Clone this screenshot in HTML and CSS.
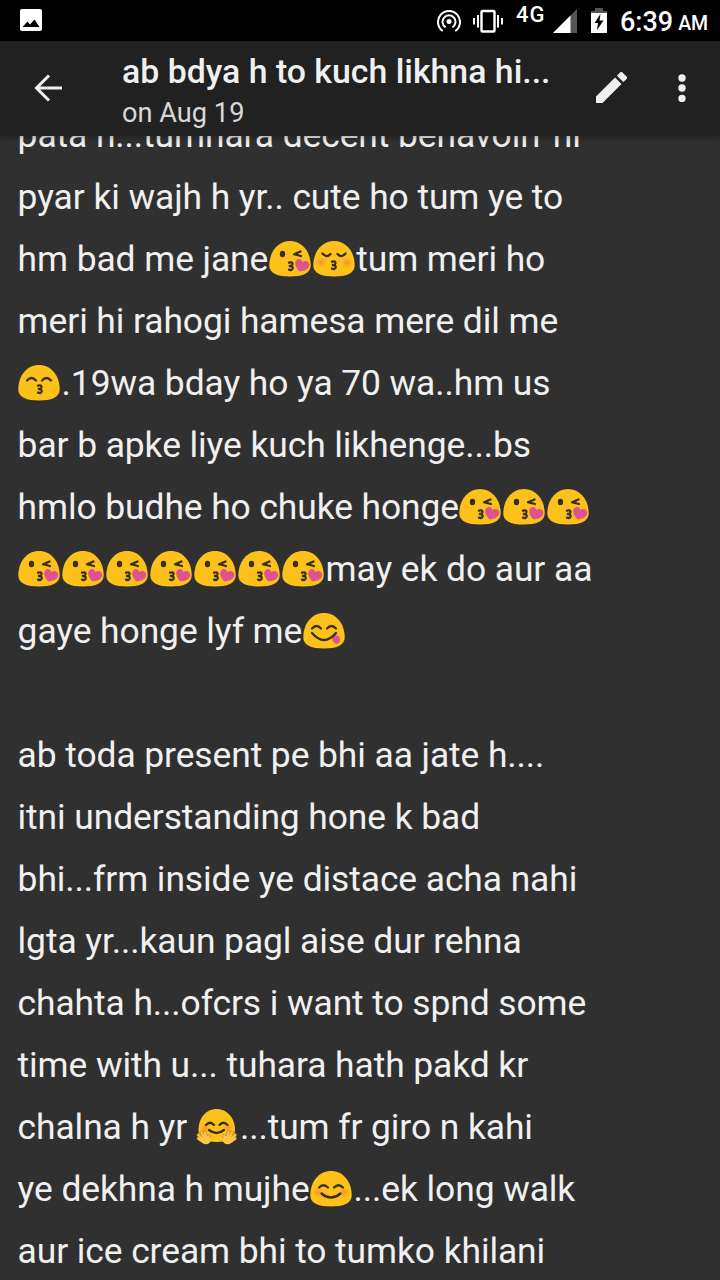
FILE: index.html
```
<!DOCTYPE html>
<html lang="hi-Latn">
<head>
<meta charset="utf-8">
<title>Note</title>
<link rel="stylesheet" href="styles.css">
</head>
<body>
<svg class="defs" aria-hidden="true">
  <defs>
    <radialGradient id="blush"><stop offset="0" stop-color="#f9852f" stop-opacity=".85"/><stop offset="1" stop-color="#f9a025" stop-opacity="0"/></radialGradient>
    <path id="head" d="M22 4C10 4 1.300 14.500 1.300 28.500C1.300 36.500 10 39.500 22 39.500S42.700 36.500 42.700 28.500C42.700 14.500 34 4 22 4Z" fill="#fcc21b"/>
    <path id="pout" d="M21 24.700Q25 23.700 24.500 26.300Q24 28 21.800 28Q25 28 24.700 30.500Q24 32.700 21 31.700" class="line"/>
    <symbol id="kiss" viewBox="0 0 44 44">
      <use href="#head"/><ellipse cx="14.500" cy="17" rx="2.700" ry="3.300" fill="#3a2f22"/>
      <path d="M32.500 14.500L26 17.200L33 19" class="line"/><use href="#pout" x="0" y="1"/>
      <path d="M31.500 34.500C27 30 26.500 26 28 23.600C30 21 33.500 21.500 34.300 25C37.500 22.500 41.500 24.500 41.300 28C41 31.500 37 34 31.500 34.500Z" fill="#dd538f"/>
    </symbol>
    <symbol id="blushkiss" viewBox="0 0 44 44">
      <use href="#head"/><circle cx="9" cy="25.500" r="6" fill="url(#blush)"/><circle cx="35" cy="25.500" r="6" fill="url(#blush)"/>
      <path d="M10.500 16.500Q14.500 21.500 18.500 17M25.500 17Q29.500 21.500 33.500 16.500" class="line"/><use href="#pout" x="-1"/>
    </symbol>
    <symbol id="smilekiss" viewBox="0 0 44 44">
      <use href="#head"/><path d="M10 19.500Q14.500 14.500 19 19.500M25 19.500Q29.500 14.500 34 19.500" class="line"/><use href="#pout"/>
    </symbol>
    <symbol id="yum" viewBox="0 0 44 44">
      <use href="#head"/><path d="M10 19.500Q14.500 14.500 19 19.500M25 19.500Q29.500 14.500 34 19.500" class="line"/>
      <path d="M31 28C34 24.500 38 27 38 31C38 35 33.500 36 31.500 33Q30 31 30 29Z" fill="#dd538f"/><path d="M10 24Q22 38 34 24" class="line"/>
    </symbol>
    <symbol id="smile" viewBox="0 0 44 44">
      <use href="#head"/><circle cx="9" cy="25.500" r="6" fill="url(#blush)"/><circle cx="35" cy="25.500" r="6" fill="url(#blush)"/>
      <path d="M10 20.500Q14.500 16 19 20.500M25 20.500Q29.500 16 34 20.500M12.500 26.500Q22 34.500 31.500 26.500" class="line"/>
    </symbol>
    <symbol id="hand" viewBox="0 0 16 14" overflow="visible">
      <path d="M4.500 2L7.500 8M1.500 4.500L6 9M1.500 8L6 11M8 1.800L9 7M12.500 5.500L11 9" stroke="#c98a1c" stroke-width="3.600" stroke-linecap="round"/>
      <ellipse cx="9" cy="9.500" rx="4.800" ry="4.200" fill="#fcc64a"/>
      <path d="M4.500 2L7.500 8M1.500 4.500L6 9M1.500 8L6 11M8 1.800L9 7M12.500 5.500L11 9" stroke="#fcc64a" stroke-width="2.200" stroke-linecap="round"/>
    </symbol>
    <symbol id="hug" viewBox="0 0 44 44">
      <path d="M21.500 4C11 4 3.500 13 3.500 25C3.500 34 10 37 21.500 37S40 34 40 25C40 13 32 4 21.500 4Z" fill="#fcc21b"/>
      <circle cx="10" cy="23.500" r="5" fill="url(#blush)"/><circle cx="33" cy="23.500" r="5" fill="url(#blush)"/>
      <path d="M11 20Q15 15.500 19 20M24.500 20Q28.500 15.500 32.500 20M14 25Q21.500 31 29 25" class="line"/>
      <use href="#hand" x="2" y="25.500" width="16" height="14"/><g transform="translate(41.500 25.500) scale(-1 1)"><use href="#hand" width="16" height="14"/></g>
    </symbol>
  </defs>
</svg>
<div class="screen">
  <div class="status">
    <svg class="picture" width="22" height="22" viewBox="0 0 22 22"><rect width="22" height="22" rx="2" fill="#fff"/><path d="M2.500 18L7.500 12.500L10 15.500L14.500 10.500L19.500 18Z"/></svg>
    <svg class="hotspot" width="24" height="24" viewBox="0 0 24 24" fill="none" stroke="#fff" stroke-width="2"><circle cx="12" cy="12.500" r="2.500" fill="#fff" stroke="none"/><path d="M5.800 22A11 11 0 1 1 18.200 22M8.600 18.300A6.500 6.500 0 1 1 15.400 18.300"/></svg>
    <svg class="vibrate" width="30" height="24" viewBox="0 0 30 24" fill="none" stroke="#fff" stroke-width="2"><rect x="8.500" y="2" width="13" height="20.500" rx="1" stroke-width="2.400"/><path d="M5 6V18.500M1 9V15.500M25 6V18.500M29 9V15.500"/></svg>
    <span class="network">4G</span>
    <svg class="signal" width="24" height="24" viewBox="0 0 24 24"><path d="M0 24L24 0V24Z" fill="#555"/><path d="M0 24L17.500 6.500V24Z" fill="#fff"/></svg>
    <svg class="battery" width="16" height="25" viewBox="0 0 16 25"><path d="M0 3H4V0H12V3H16V7H0Z" fill="#555"/><path d="M0 5H16V25H0Z" fill="#fff"/><path d="M9.500 6L3.500 15H7L6 22L12.500 12.500H8.500Z"/></svg>
    <span class="time">6:39</span><span class="ampm">AM</span>
  </div>
  <header class="bar">
    <svg class="back" width="28" height="28" viewBox="0 0 28 28" fill="none" stroke="#f0f0f0" stroke-width="3"><path d="M15 1.500L2.500 14L15 26.500M2.500 14H28"/></svg>
    <div class="heading"><h1 class="title">ab bdya h to kuch likhna hi...</h1><div class="date">on Aug 19</div></div>
    <svg class="edit" width="31" height="31" viewBox="3 3 18 18" fill="#f0f0f0"><path d="M3 17.250V21h3.750L17.810 9.940l-3.750-3.750L3 17.250zM20.710 7.040a1 1 0 0 0 0-1.410l-2.340-2.340a1 1 0 0 0-1.410 0l-1.830 1.830 3.750 3.750 1.830-1.830z"/></svg>
    <svg class="more" width="8" height="28" viewBox="0 0 8 28" fill="#f0f0f0"><circle cx="4" cy="4" r="3.700"/><circle cx="4" cy="14" r="3.700"/><circle cx="4" cy="24.500" r="3.700"/></svg>
  </header>
  <main class="note">
    <div class="lines">
      <div>pata h...tumhara decent behavoirr hi</div>
      <div>pyar ki wajh h yr.. cute ho tum ye to</div>
      <div>hm bad me jane<svg class="emoji"><use href="#kiss"/></svg><svg class="emoji"><use href="#blushkiss"/></svg>tum meri ho</div>
      <div>meri hi rahogi hamesa mere dil me</div>
      <div><svg class="emoji"><use href="#smilekiss"/></svg>.19wa bday ho ya 70 wa..hm us</div>
      <div>bar b apke liye kuch likhenge...bs</div>
      <div>hmlo budhe ho chuke honge<svg class="emoji"><use href="#kiss"/></svg><svg class="emoji"><use href="#kiss"/></svg><svg class="emoji"><use href="#kiss"/></svg></div>
      <div><svg class="emoji"><use href="#kiss"/></svg><svg class="emoji"><use href="#kiss"/></svg><svg class="emoji"><use href="#kiss"/></svg><svg class="emoji"><use href="#kiss"/></svg><svg class="emoji"><use href="#kiss"/></svg><svg class="emoji"><use href="#kiss"/></svg><svg class="emoji"><use href="#kiss"/></svg>may ek do aur aa</div>
      <div>gaye honge lyf me<svg class="emoji"><use href="#yum"/></svg></div>
      <div></div>
      <div>ab toda present pe bhi aa jate h....</div>
      <div>itni understanding hone k bad</div>
      <div>bhi...frm inside ye distace acha nahi</div>
      <div>lgta yr...kaun pagl aise dur rehna</div>
      <div>chahta h...ofcrs i want to spnd some</div>
      <div>time with u... tuhara hath pakd kr</div>
      <div>chalna h yr <svg class="emoji"><use href="#hug"/></svg>...tum fr giro n kahi</div>
      <div>ye dekhna h mujhe<svg class="emoji"><use href="#smile"/></svg>...ek long walk</div>
      <div>aur ice cream bhi to tumko khilani</div>
    </div>
  </main>
</div>
</body>
</html>
```
FILE: styles.css
```
body { margin: 0; background: #303030; font-family: Roboto, sans-serif; color: #f0f0f0; }
.defs { position: absolute; width: 0; height: 0; }
.screen { width: 720px; height: 1280px; display: flex; flex-direction: column; overflow: hidden; }
.status { height: 41px; flex: none; background: #000; display: flex; align-items: flex-start; color: #fff; }
.status svg, .bar svg { flex: none; }
.picture { margin: 9px 0 0 20px; }
.hotspot { margin: 9px 0 0 395px; }
.vibrate { margin: 9px 0 0 12px; }
.network { width: 38px; margin: 3px 0 0 13px; font-size: 22px; line-height: 24px; font-weight: 500; letter-spacing: 1px; }
.signal { margin: 9px 0 0 -1px; }
.battery { margin: 8px 0 0 14px; }
.time { margin: 6px 0 0 13px; font-size: 27px; line-height: 32px; font-weight: 500; }
.ampm { margin: 12px 0 0 5px; font-size: 19.500px; line-height: 24px; font-weight: 500; }
.bar { height: 95px; flex: none; background: #212121; display: flex; align-items: flex-start; position: relative; box-shadow: 0 2px 6px rgba(0,0,0,.3); z-index: 1; }
.back { margin: 33px 0 0 34px; }
.heading { width: 474px; margin: 11px 0 0 60px; }
.title { margin: 0; font-size: 33.850px; line-height: 40px; font-weight: 500; white-space: nowrap; }
.date { font-size: 27.200px; line-height: 32px; margin-top: 5px; color: #d8d8d8; white-space: nowrap; }
.edit { margin: 31px 0 0 0; }
.more { margin: 33px 0 0 51px; }
.note { flex: 1; overflow: hidden; min-height: 0; background: #303030; }
.lines { margin-top: -32px; padding-left: 17.600px; font-size: 35.400px; letter-spacing: -.08px; white-space: nowrap; }
.lines > div { height: 62px; line-height: 62px; }
.emoji { width: 44px; height: 44px; margin: 0 .600px 0 -.600px; vertical-align: -10px; }
.line { fill: none; stroke: #3a2f22; stroke-width: 2.300; stroke-linecap: round; stroke-linejoin: round; }
```
